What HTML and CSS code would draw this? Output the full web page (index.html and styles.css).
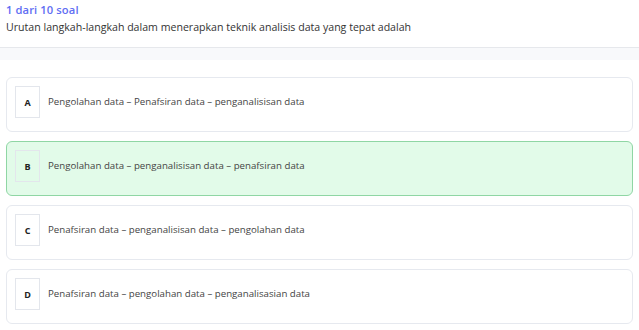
FILE: index.html
```html
<!DOCTYPE html>
<html>
<head>
<meta charset="utf-8">
<link rel="stylesheet" href="styles.css">
</head>
<body>
<div class="header">
  <div class="counter">1 dari 10 soal</div>
  <div class="question">Urutan langkah-langkah dalam menerapkan teknik analisis data yang tepat adalah</div>
</div>
<div class="band"></div>
<div class="options">
  <div class="option">
    <div class="letter">A</div>
    <div class="text">Pengolahan data – Penafsiran data – penganalisisan data</div>
  </div>
  <div class="option selected">
    <div class="letter">B</div>
    <div class="text">Pengolahan data – penganalisisan data – penafsiran data</div>
  </div>
  <div class="option">
    <div class="letter">C</div>
    <div class="text">Penafsiran data – penganalisisan data – pengolahan data</div>
  </div>
  <div class="option">
    <div class="letter">D</div>
    <div class="text">Penafsiran data – pengolahan data – penganalisasian data</div>
  </div>
</div>
</body>
</html>
```
FILE: styles.css
```css
* { box-sizing: border-box; }
body {
  margin: 0;
  background: #fff;
  font-family: "Open Sans", "Liberation Sans", sans-serif;
  color: #333;
}
.header {
  height: 48px;
  padding: 3px 6px 0;
  background: #fff;
  border-bottom: 1px solid #e6e8ec;
  box-shadow: 0 1px 2px rgba(0,0,0,0.06);
}
.counter {
  font-size: 11.2px;
  font-weight: 600;
  letter-spacing: 0.1px;
  color: #5f6ef3;
  line-height: 14px;
}
.question {
  margin-top: 3px;
  font-size: 10.6px;
  line-height: 15px;
  color: #333;
}
.band {
  height: 12px;
  background: #f8f9fb;
}
.options {
  padding: 17px 6px 0 6px;
  display: flex;
  flex-direction: column;
  gap: 9px;
}
.option {
  height: 55px;
  border: 1px solid #e6e9ef;
  border-radius: 6px;
  background: #fff;
  display: flex;
  align-items: flex-start;
  padding: 8px 8px 0 8px;
  gap: 8px;
}
.option.selected {
  background: #e2fbe9;
  border-color: #8fd6a4;
}
.letter {
  width: 25px;
  height: 32px;
  border: 1px solid #e3e6ec;
  display: flex;
  align-items: center;
  justify-content: center;
  font-size: 9px;
  font-weight: 700;
  color: #222;
  flex: none;
}
.text {
  font-size: 9.7px;
  line-height: 31px;
  color: #444;
}
```
